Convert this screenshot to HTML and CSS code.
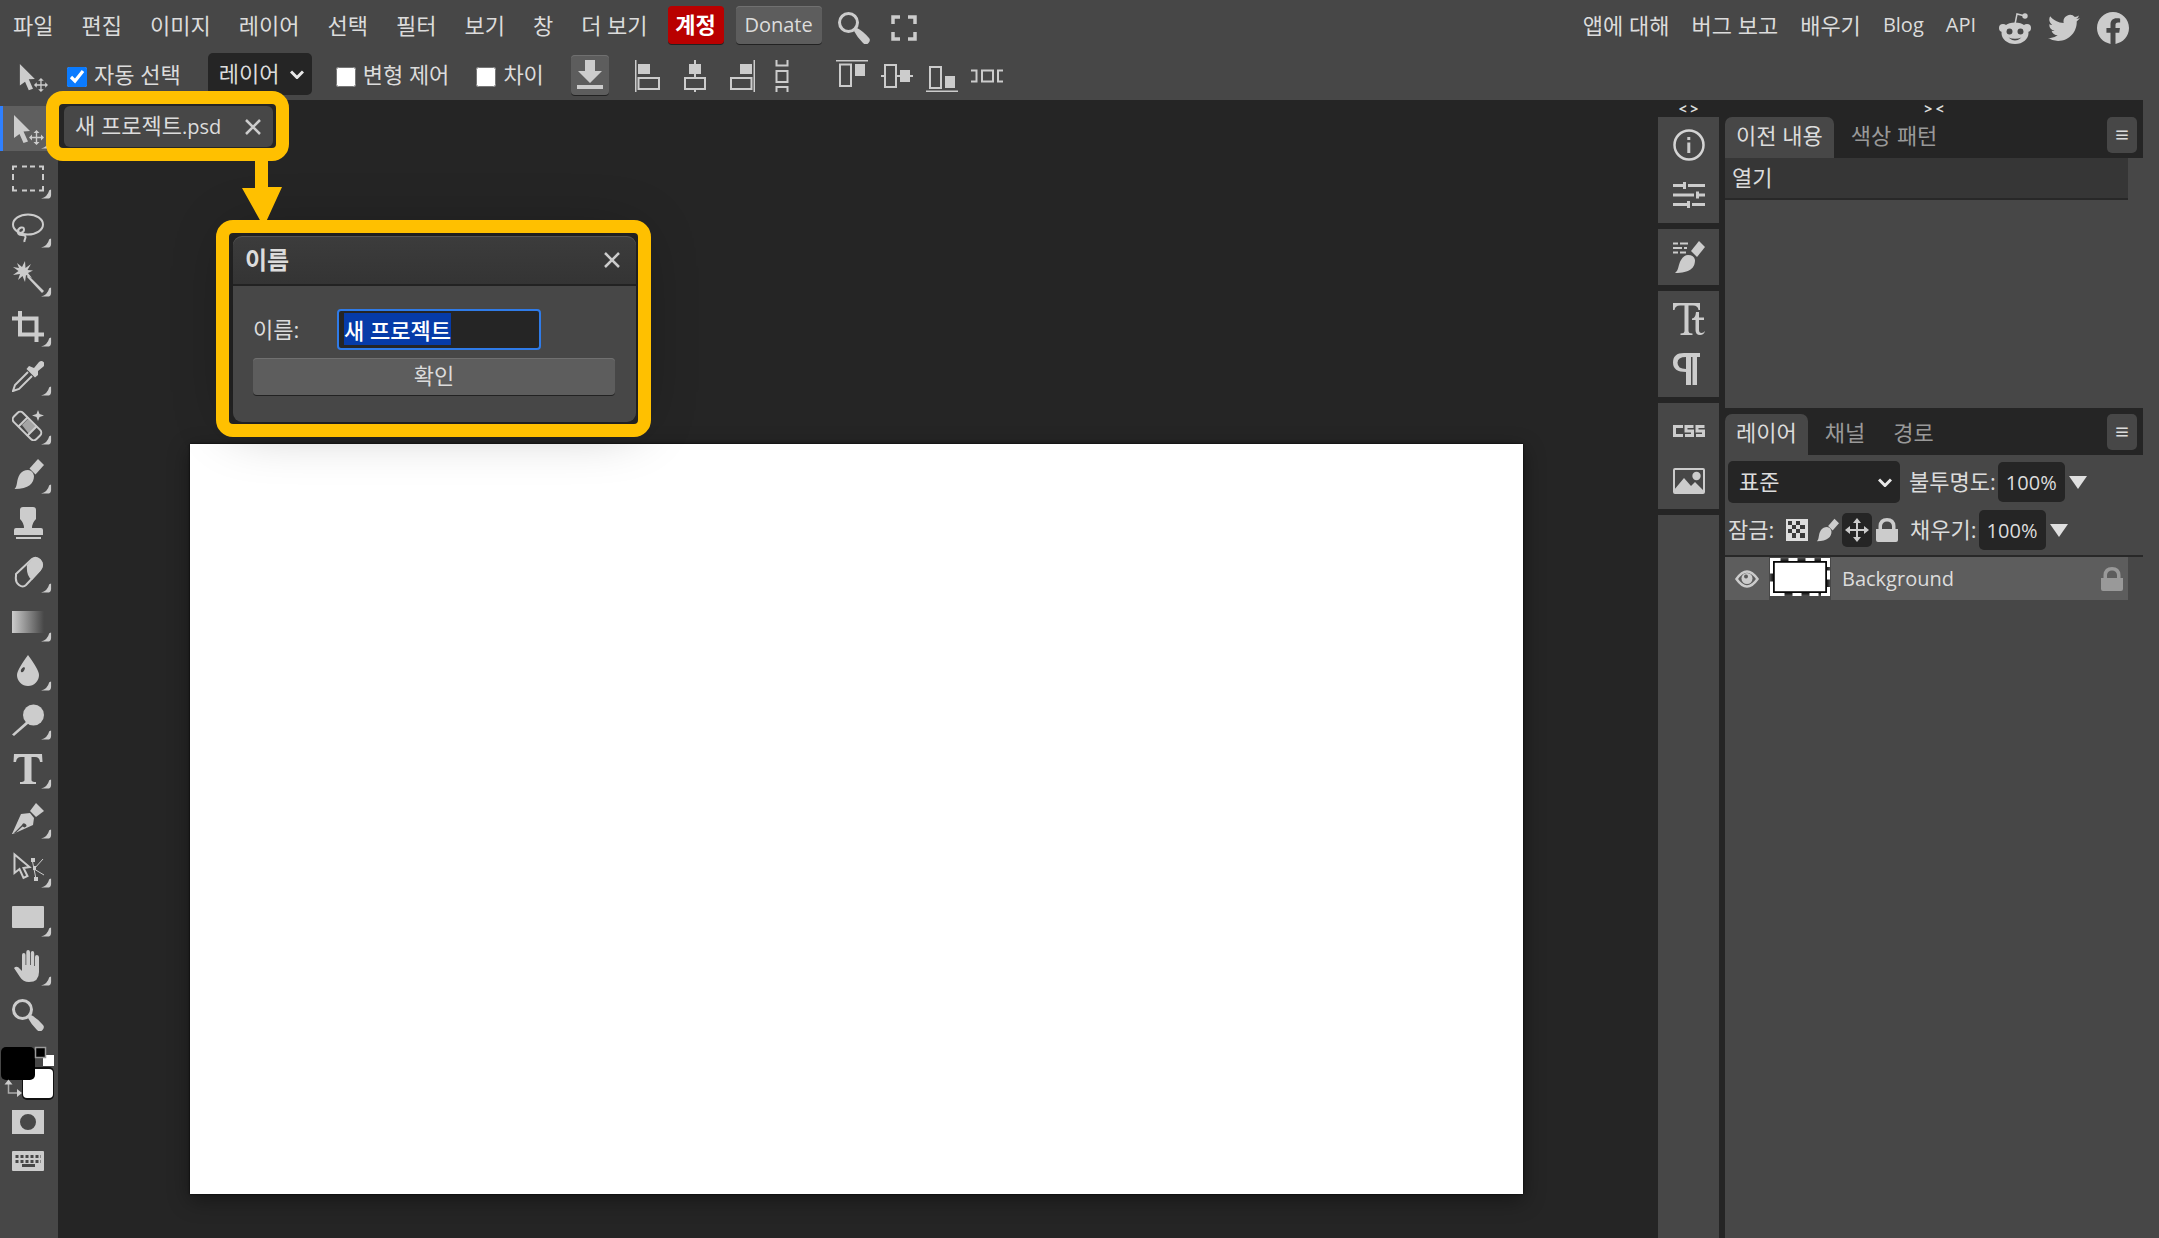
FILE: index.html
```html
<!DOCTYPE html>
<html lang="ko">
<head>
<meta charset="utf-8">
<title>새 프로젝트.psd</title>
<link rel="stylesheet" href="styles.css">
</head>
<body>
<svg class="defs" aria-hidden="true">
  <defs>
    <linearGradient id="fade"><stop offset="0" stop-color="#ccc"/><stop offset="1" stop-color="#474747"/></linearGradient>
  </defs>
  <symbol id="more" viewBox="0 0 12 10"><path d="M0 10Q7 8.500 9 1L11 0V6Q11 10 7 10Z"/></symbol>
  <symbol id="move" viewBox="0 0 32 32"><path d="M2 2L18 18L11.500 18.500L16 28.500L11.500 30L7.500 21L2 25Z"/><path d="M24.500 17l3 3h-2.300v3.800H29v-2.300l3 3-3 3v-2.300h-3.800V29h2.300l-3 3-3-3h2.300v-3.800H20v2.300l-3-3 3-3v2.300h3.800V20h-2.300z"/></symbol>
  <symbol id="marquee" viewBox="0 0 32 32"><path class="line" d="M1 8V4.500H5M10 4.500h5M18 4.500h5M27 4.500h4V8M31 12v6M31 24v4.500h-4M23 28.500h-5M15 28.500h-5M5 28.500H1V24M1 18v-6" transform="translate(0 -1)"/></symbol>
  <symbol id="lasso" viewBox="0 0 32 32"><ellipse class="line" cx="16" cy="12.500" rx="15" ry="10"/><path class="line" d="M6 20c0-5 6-6 6-2.500s-5 4.500-6 2.500c-.5 5 8 1 7.500 5.500-.2 1.500-1.500 2.500-1 4.500"/></symbol>
  <symbol id="wand" viewBox="0 0 32 32"><path d="M13 0l.5 7 5.500-4-3.500 6 5.500.5-5 2.500 4 5-6-3-1 7-2.500-6L6 19l2-6-7 1 5.500-4L1 6l6 1L5 2l5 4z"/><path d="M16 14l16 16-2 2-15-16z"/></symbol>
  <symbol id="crop" viewBox="0 0 32 32"><path class="thick" d="M0 8.500h24.500V32M8 1v23.500h24"/></symbol>
  <symbol id="dropper" viewBox="0 0 32 32"><path d="M22 8l5-6q2.500-2 4.500 0t0 4.500L26 11v4l-3 2.500-8.500-8.500L17 6z"/><path class="line" d="M16 12L3 25 1 31l6-2 13-13"/></symbol>
  <symbol id="heal" viewBox="0 0 32 32"><rect class="line" x="-1" y="10.500" width="32" height="13" rx="4" transform="rotate(45 15 17)"/><path class="line" d="M16 8L6 18M25 17L15 27"/><path d="M10 16l6-6 8 8-7 7z" opacity=".7"/><path d="M26 1l1.500 4L32 6.500 27.500 8 26 12l-1.500-4L20 6.500 24.500 5z"/></symbol>
  <symbol id="brush" viewBox="0 0 32 32"><path d="M26 1l6 6-8.500 9.500-6-6z"/><path d="M16 12q5 .5 6 6c0 7-5 13-19.500 13C6 28 4 22 8 16q3-4 8-4z"/></symbol>
  <symbol id="stamp" viewBox="0 0 32 32"><path d="M8 3q0-3 3-3h10q3 0 3 3v9q-4 4-4 9h9q2 0 2 2v5H2v-5q0-2 2-2h8q0-5-4-9zM4 30h25v2H4z"/></symbol>
  <symbol id="eraser" viewBox="0 0 32 32"><path class="line" d="M4 18L20 3q4-3 8 1 4 5 0 10L14 29q-3 3-7 0t-3-9z"/><path d="M15 9l6-7q4-2 8 2t0 10l-9 10q-6-4-5-15z"/></symbol>
  <symbol id="gradient" viewBox="0 0 32 32"><path fill="url(#fade)" d="M0 5h32v22H0z"/></symbol>
  <symbol id="drop" viewBox="0 0 32 32"><path fill-rule="evenodd" d="M16 0q11 15 11 20a11 11 0 0 1-22 0Q5 15 16 0zM12 12q-4 2-3 5 3 1 4-4z"/></symbol>
  <symbol id="dodge" viewBox="0 0 32 32"><circle cx="21.500" cy="11" r="10.500"/><path d="M15 17l2 2L2 32 0 30.500z"/></symbol>
  <symbol id="type" viewBox="0 0 32 32"><path d="M2 1h28l.5 8H28q-.5-5-5-5h-3.500v23q0 2 4.500 2v2H8v-2q4.500 0 4.500-2V4H9Q4.500 4 4 9H1.500z"/></symbol>
  <symbol id="pen" viewBox="0 0 32 32"><path d="M24 1l8 8-8 6-6-6z"/><path fill-rule="evenodd" d="M9 12l9-1 4 5-1 7L1 32l9-9q1-3 3.500-1t-1 3.500l-2-1L3 31.500 0 32z"/></symbol>
  <symbol id="path" viewBox="0 0 32 32"><path class="line" d="M2.500 2.500V21l5-4 4 9 4-2-4-8 6-1z"/><path class="line thin" d="M20 7l4 20M22 17l9-10M22 17l10 6"/><path d="M19 6h4v4h-4zM21 14h3v4h-3zM22 25h4v4h-4z"/></symbol>
  <symbol id="rect" viewBox="0 0 32 32"><rect y="5" width="32" height="22" rx="1"/></symbol>
  <symbol id="hand" viewBox="0 0 32 32"><path d="M2 18q3-3 6 1l2 2V5q0-2 1.800-2T13.500 5v10h.8V2q0-2 1.800-2T18 2v13h.8V3q0-2 1.700-2t1.700 2v13h.8V7q0-2 1.800-2T27 7v15q0 10-10 10-6 0-9-5z"/></symbol>
  <symbol id="zoom" viewBox="0 0 32 32"><circle cx="10.500" cy="10.500" r="9" fill="none" stroke="#ccc" stroke-width="3"/><path d="M16 19l3-3q6 3 12 10 2 2-.5 5t-5.500 0q-6-6-9-12z"/></symbol>
  <symbol id="mask" viewBox="0 0 32 24"><path fill-rule="evenodd" d="M0 0h32v24H0zM16 4a8 8 0 1 0 0 16 8 8 0 0 0 0-16z"/></symbol>
  <symbol id="keyboard" viewBox="0 0 32 20"><rect width="32" height="20" rx="1"/><path stroke="#474747" stroke-width="3" stroke-dasharray="3 2" d="M3.500 5.500H29M3.500 10.500H29"/><path fill="#474747" d="M10 13h13v3H10z"/></symbol>
  <symbol id="lock" viewBox="0 0 22 24"><path fill-rule="evenodd" d="M0 11h2.500V8Q3 0 11 0t8.500 8v3H22v11q0 2-2 2H2q-2 0-2-2zM6 11h10V8q-.5-4.500-5-4.500T6 8z"/></symbol>
  <symbol id="close" viewBox="0 0 16 16"><path fill="none" stroke="#ccc" stroke-width="2.500" d="M1 1l14 14M15 1L1 15"/></symbol>
  <symbol id="chevron" viewBox="0 0 14 9"><path fill="none" stroke="#e8e8e8" stroke-width="3" d="M1 1.500l6 6 6-6"/></symbol>
</svg>

<header class="top">
  <nav class="menubar">
    <div class="menus">
      <button>파일</button><button>편집</button><button>이미지</button><button>레이어</button><button>선택</button><button>필터</button><button>보기</button><button>창</button><button>더 보기</button>
    </div>
    <button class="raised account">계정</button>
    <button class="raised donate">Donate</button>
    <button class="bare search" aria-label="검색"><svg class="i32"><use href="#zoom"/></svg></button>
    <button class="bare" aria-label="전체 화면"><svg class="i26" viewBox="0 0 26 26"><path fill="none" stroke="#ccc" stroke-width="3.500" d="M2 9V2h7M17 2h7v7M24 17v7h-7M9 24H2v-7"/></svg></button>
    <div class="links">
      <a href="#about">앱에 대해</a><a href="#bug">버그 보고</a><a href="#learn">배우기</a><a class="latin" href="#blog">Blog</a><a class="latin" href="#api">API</a>
    </div>
    <div class="social">
      <a href="#reddit" aria-label="Reddit"><svg class="i32" viewBox="0 0 32 32"><path fill="none" stroke="#ccc" stroke-width="1.500" d="M16 12l2-10 8 2"/><circle cx="26" cy="4" r="2.700"/><circle cx="4" cy="16" r="4"/><circle cx="28" cy="16" r="4"/><path fill-rule="evenodd" d="M16 10.500c8 0 13.500 4.500 13.500 10.500S24 32 16 32 2.500 27 2.500 21 8 10.500 16 10.500zM10.500 16.500a3 3 0 1 0 0 6 3 3 0 0 0 0-6zm11 0a3 3 0 1 0 0 6 3 3 0 0 0 0-6zM9.500 25.500q6.500 6 13 0-6.500 2.500-13 0z"/></svg></a>
      <a href="#twitter" aria-label="Twitter"><svg class="i32" viewBox="0 0 24 24"><path d="M23.950 4.570a10 10 0 0 1-2.820.77 4.960 4.960 0 0 0 2.160-2.720c-.95.55-2 .95-3.130 1.180a4.920 4.920 0 0 0-8.380 4.480C7.690 8.090 4.070 6.130 1.640 3.160a4.920 4.920 0 0 0 1.520 6.570 4.900 4.900 0 0 1-2.230-.61v.06a4.920 4.920 0 0 0 3.950 4.830 5 5 0 0 1-2.210.08 4.940 4.940 0 0 0 4.600 3.420A9.870 9.870 0 0 1 0 19.540a14 14 0 0 0 7.550 2.210c9.050 0 14-7.500 14-13.980 0-.21 0-.42-.02-.63a9.900 9.900 0 0 0 2.420-2.570z"/></svg></a>
      <a href="#facebook" aria-label="Facebook"><svg class="i32" viewBox="0 0 24 24"><path d="M24 12.070C24 5.450 18.630.07 12 .07S0 5.450 0 12.070c0 5.990 4.390 10.950 10.130 11.860v-8.390H7.080v-3.470h3.050V9.430c0-3.010 1.790-4.670 4.530-4.670 1.310 0 2.690.23 2.690.23v2.960h-1.520c-1.490 0-1.950.92-1.950 1.870v2.250h3.320l-.53 3.470h-2.790v8.390C19.610 23.020 24 18.060 24 12.070z"/></svg></a>
    </div>
  </nav>
  <div class="options">
    <svg class="i30 current"><use href="#move"/></svg>
    <label class="check"><input type="checkbox" checked>자동 선택</label>
    <div class="pick target"><select aria-label="대상"><option>레이어</option></select><svg><use href="#chevron"/></svg></div>
    <label class="check"><input type="checkbox">변형 제어</label>
    <label class="check"><input type="checkbox">차이</label>
    <button class="raised download" aria-label="내려받기"><svg viewBox="0 0 26 30" width="26" height="30"><path d="M8 0h10v11h7L13 23 1 11h7zM0 25h26v4H0z"/></svg></button>
    <div class="aligns">
      <button class="bare" aria-label="왼쪽 정렬"><svg class="i32" viewBox="0 0 32 32"><path d="M7 4h12v10H7zM4 0h1.500v32H4z"/><path class="line" d="M7.500 18H28v11H7.500z"/></svg></button>
      <button class="bare" aria-label="가로 가운데 정렬"><svg class="i32" viewBox="0 0 32 32"><path d="M10 4h12v10H10zM15 0h2v17h-2zM15 29h2v3h-2z"/><path class="line" d="M6 18h20v11H6z"/></svg></button>
      <button class="bare" aria-label="오른쪽 정렬"><svg class="i32" viewBox="0 0 32 32"><path d="M13 4h12v10H13zM26.500 0H28v32h-1.500z"/><path class="line" d="M4 18h20.500v11H4z"/></svg></button>
      <button class="bare" aria-label="세로 분배"><svg viewBox="0 0 14 32" width="14" height="32"><path class="line" d="M1.500 0v5.500h11V0M1.500 11h11v11h-11zM1.500 32v-5h11v5"/></svg></button>
    </div>
    <div class="aligns rows">
      <button class="bare" aria-label="위쪽 정렬"><svg class="i32" viewBox="0 0 32 32"><path d="M0 0h32v1.500H0zM19 4h10v12H19z"/><path class="line" d="M4 4.500h11V26H4z"/></svg></button>
      <button class="bare" aria-label="세로 가운데 정렬"><svg class="i32" viewBox="0 0 32 32"><path d="M0 15h4v2H0zM15 15h17v2H15zM19 10h10v12H19z"/><path class="line" d="M4 5h11v22H4z"/></svg></button>
      <button class="bare" aria-label="아래쪽 정렬"><svg class="i32" viewBox="0 0 32 32"><path d="M0 30.500h32V32H0zM19 16h10v12H19z"/><path class="line" d="M4 7h11v21H4z"/></svg></button>
      <button class="bare" aria-label="가로 분배"><svg class="i32" viewBox="0 0 32 32"><path class="line" d="M0 10.500h5.500v11H0M11 10.500h11v11H11zM32 10.500h-5v11h5"/></svg></button>
    </div>
  </div>
</header>

<main class="work">
  <aside class="tools">
    <button class="tool active" aria-label="이동"><svg class="i32"><use href="#move"/></svg><svg class="more"><use href="#more"/></svg></button>
    <button class="tool" aria-label="사각 선택"><svg class="i32"><use href="#marquee"/></svg><svg class="more"><use href="#more"/></svg></button>
    <button class="tool" aria-label="올가미"><svg class="i32"><use href="#lasso"/></svg><svg class="more"><use href="#more"/></svg></button>
    <button class="tool" aria-label="마술봉"><svg class="i32"><use href="#wand"/></svg><svg class="more"><use href="#more"/></svg></button>
    <button class="tool" aria-label="자르기"><svg class="i32"><use href="#crop"/></svg><svg class="more"><use href="#more"/></svg></button>
    <button class="tool" aria-label="스포이드"><svg class="i32"><use href="#dropper"/></svg><svg class="more"><use href="#more"/></svg></button>
    <button class="tool" aria-label="복구"><svg class="i32"><use href="#heal"/></svg><svg class="more"><use href="#more"/></svg></button>
    <button class="tool" aria-label="브러시"><svg class="i32"><use href="#brush"/></svg><svg class="more"><use href="#more"/></svg></button>
    <button class="tool" aria-label="도장"><svg class="i32"><use href="#stamp"/></svg></button>
    <button class="tool" aria-label="지우개"><svg class="i32"><use href="#eraser"/></svg><svg class="more"><use href="#more"/></svg></button>
    <button class="tool" aria-label="그레이디언트"><svg class="i32"><use href="#gradient"/></svg><svg class="more"><use href="#more"/></svg></button>
    <button class="tool" aria-label="흐림"><svg class="i32"><use href="#drop"/></svg><svg class="more"><use href="#more"/></svg></button>
    <button class="tool" aria-label="닷지"><svg class="i32"><use href="#dodge"/></svg><svg class="more"><use href="#more"/></svg></button>
    <button class="tool" aria-label="문자"><svg class="i32"><use href="#type"/></svg><svg class="more"><use href="#more"/></svg></button>
    <button class="tool" aria-label="펜"><svg class="i32"><use href="#pen"/></svg><svg class="more"><use href="#more"/></svg></button>
    <button class="tool" aria-label="패스 선택"><svg class="i32"><use href="#path"/></svg><svg class="more"><use href="#more"/></svg></button>
    <button class="tool" aria-label="사각형"><svg class="i32"><use href="#rect"/></svg><svg class="more"><use href="#more"/></svg></button>
    <button class="tool" aria-label="손"><svg class="i32"><use href="#hand"/></svg><svg class="more"><use href="#more"/></svg></button>
    <button class="tool" aria-label="돋보기"><svg class="i32"><use href="#zoom"/></svg></button>
    <svg class="swatches" viewBox="0 0 58 56"><rect x="22" y="21" width="32" height="33" rx="5" fill="#111"/><rect x="23" y="23" width="30" height="29" rx="4" fill="#fff"/><rect x="1" y="1" width="34" height="33" rx="5" fill="#000"/><path fill="#fff" d="M43 9h11v11H43z"/><path fill="#000" stroke="#999" stroke-width="1.500" d="M35.500 1.500h10v10h-10z"/><path fill="none" stroke="#aaa" stroke-width="1.500" d="M8.500 37v10H20"/><path d="M8.500 33.500l-4 5h8zM22 47l-5-4v8z"/></svg>
    <button class="tool quick" aria-label="빠른 마스크"><svg width="32" height="24"><use href="#mask"/></svg></button>
    <button class="tool quick" aria-label="키보드"><svg width="32" height="20"><use href="#keyboard"/></svg></button>
  </aside>

  <section class="stage">
    <div class="tabs">
      <div class="doc"><span>새 프로젝트<span class="latin">.psd</span></span><button class="bare" aria-label="닫기"><svg class="i16"><use href="#close"/></svg></button></div>
    </div>
    <div class="canvas"></div>

    <form class="dialog">
      <div class="title"><h2>이름</h2><button type="button" class="bare" aria-label="닫기"><svg class="i16"><use href="#close"/></svg></button></div>
      <div class="body">
        <div class="field"><label for="name">이름:</label><input id="name" type="text" value="새 프로젝트" autofocus></div>
        <button type="button" class="raised ok">확인</button>
      </div>
    </form>
    <svg class="arrow" viewBox="0 0 40 64"><path d="M13 0h13v27h14L24 62h-5L0 28h13z"/></svg>
    <div class="frame frame-tab"></div>
    <div class="frame frame-dialog"></div>
  </section>

  <aside class="strip">
    <button class="fold">&lt; &gt;</button>
    <div class="group">
      <button class="bare" aria-label="정보"><svg class="i32" viewBox="0 0 32 32"><circle cx="16" cy="16" r="14.500" fill="none" stroke="#d4d4d4" stroke-width="2.500"/><path d="M14.300 8h3v3h-3zM14.300 13.500h3V24h-3z"/></svg></button>
      <button class="bare" aria-label="조정"><svg class="i32" viewBox="0 0 32 32"><path d="M0 5h10V3h3v7h-3V8H0zM15 5h17v3H15zM0 14.500h21v3H0zM23 12.500h3v2h6v3h-6v2h-3zM0 24h14v-2h3v7h-3v-2H0zM19 24h13v3H19z"/></svg></button>
    </div>
    <div class="group">
      <button class="bare" aria-label="브러시"><svg class="i32" viewBox="0 0 32 32"><path d="M26 0l6 6-8 10-6-6z"/><path d="M15 14q6 0 7 5c0 8-5 13-20 13 4-3 3-8 6-13q3-5 7-5z"/><path fill="none" stroke="#ccc" stroke-width="2" d="M0 2.500h5M7 2.500h8M0 7h9M11 7h3M0 11.500h5M7 11.500h6"/></svg></button>
    </div>
    <div class="group">
      <button class="bare" aria-label="문자"><svg class="i32" viewBox="0 0 32 32"><path d="M0 0h27v7h-1.500Q25 2.500 20 2.500h-4.500V28q0 2.500 4 2.500V32H7.500v-1.500q4 0 4-2.500V2.500H7Q2 2.500 1.500 7H0z"/><path d="M23 9h3v5.500h5V17h-5v10q0 3 2.500 3 2 0 3.500-2-1 4-5 4-4.500 0-4.500-5V17H19v-1.500q3.500-.5 4-6.500z"/></svg></button>
      <button class="bare" aria-label="단락"><svg class="i32" viewBox="0 0 32 32"><path d="M27 0v4h-3v28h-4.500V4H18v28h-5V19Q0 19 0 9.500T11 0z"/><path fill="#474747" d="M13 4v12Q4.500 16 4.500 9.800 4.500 4 13 4z"/></svg></button>
    </div>
    <div class="group">
      <button class="bare" aria-label="CSS"><svg class="i32" viewBox="0 0 32 32"><path fill="none" stroke="#ccc" stroke-width="3" d="M10 11.500H1.500v9H10M20.500 11.500h-7.500V16h6.500v4.500H12M31.500 11.500H24V16h6.500v4.500H23"/></svg></button>
      <button class="bare" aria-label="이미지"><svg class="i32" viewBox="0 0 32 32"><rect class="line" x="1" y="4" width="30" height="24" rx="1"/><path d="M1 25l10-12 7 8 4-4 9 9v2H1z"/><circle cx="23.500" cy="11" r="4.200"/></svg></button>
    </div>
    <div class="group rest"></div>
  </aside>

  <aside class="side">
    <button class="fold">&gt; &lt;</button>
    <div class="panel history">
      <div class="heads"><button class="on">이전 내용</button><button>색상 패턴</button><button class="menu">≡</button></div>
      <div class="entry">열기</div>
    </div>
    <div class="panel layers">
      <div class="heads"><button class="on">레이어</button><button>채널</button><button>경로</button><button class="menu">≡</button></div>
      <div class="props">
        <div class="row">
          <div class="pick blend"><select aria-label="혼합 모드"><option>표준</option></select><svg><use href="#chevron"/></svg></div>
          <label for="opacity">불투명도:</label><input id="opacity" class="num" value="100%"><svg class="tri" viewBox="0 0 18 13"><path d="M0 0h18L9 13z"/></svg>
        </div>
        <div class="row">
          <span class="lockname">잠금:</span>
          <button class="bare lk" aria-label="투명 픽셀"><svg class="i22" viewBox="0 0 22 22"><path fill="#ddd" d="M0 0h22v22H0z"/><path fill="#3a3a3a" d="M2 2h4v4H2zM10 2h4v4h-4zM6 6h4v4H6zM14 6h5v4h-5zM2 10h4v4H2zM10 10h4v4h-4zM6 14h4v5H6zM14 14h5v5h-5z"/></svg></button>
          <button class="bare lk" aria-label="픽셀"><svg class="i24"><use href="#brush"/></svg></button>
          <button class="bare lk pressed" aria-label="위치"><svg class="i24" viewBox="0 0 24 24"><path d="M12 0l4 5h-3v6h6V8l5 4-5 4v-3h-6v6h3l-4 5-4-5h3v-6H5v3l-5-4 5-4v3h6V5H8z"/></svg></button>
          <button class="bare lk" aria-label="모두"><svg width="22" height="24"><use href="#lock"/></svg></button>
          <label class="filllabel" for="fill">채우기:</label><input id="fill" class="num" value="100%"><svg class="tri" viewBox="0 0 18 13"><path d="M0 0h18L9 13z"/></svg>
        </div>
      </div>
      <div class="layer">
        <button class="bare eye" aria-label="보기"><svg width="24" height="18" viewBox="0 0 24 18"><path fill="none" stroke="#ccc" stroke-width="2.500" d="M1.500 9q10.500-15 21 0-10.500 15-21 0z"/><circle cx="12" cy="8.500" r="5.500"/><circle cx="11" cy="6.500" r="2" fill="#5b5b5b"/></svg></button>
        <div class="thumb"><svg width="60" height="38" viewBox="0 0 60 38"><rect x="1.500" y="1.500" width="57" height="35" fill="#222" stroke="#fff" stroke-width="3" stroke-dasharray="9 8"/><path fill="none" stroke="#fff" stroke-width="3" d="M1.500 9V1.500H9M51 1.500h7.500V9M58.500 29v7.500H51M9 36.500H1.500V29"/><path fill="#fff" stroke="#000" stroke-width="1.500" d="M4 4h52v30H4z"/></svg></div>
        <div class="name latin">Background</div>
        <svg class="locked" width="22" height="24"><use href="#lock"/></svg>
      </div>
    </div>
  </aside>
</main>
<script src="main.js"></script>
</body>
</html>
```
FILE: main.js
```js
// The name is ready to be typed over as soon as the dialog opens.
const nameField = document.getElementById('name');
nameField.focus();
nameField.select();
```
FILE: styles.css
```css
:root {
  --base: #474747;
  --dark: #252525;
  --raised: #5d5d5d;
  --text: #dcdcdc;
  --amber: #ffc000;
}
* { box-sizing: border-box; }
body {
  margin: 0;
  min-height: 100vh;
  display: flex;
  flex-direction: column;
  background: var(--base);
  color: var(--text);
  font: 22px/30px "Open Sans", "Noto Sans CJK KR", sans-serif;
  overflow: hidden;
}
button, input, select { font: inherit; color: inherit; border: 0; margin: 0; padding: 0; background: none; }
a { color: inherit; text-decoration: none; }
svg { display: block; fill: #ccc; flex: none; }
.defs { position: absolute; width: 0; height: 0; }
.line { fill: none; stroke: #ccc; stroke-width: 2; }
.thick { fill: none; stroke: #ccc; stroke-width: 4; }
.thin { stroke-width: 1; }
.latin { font-size: 20px; }
.bare { display: flex; align-items: center; justify-content: center; }
.i16 { width: 16px; height: 16px; }
.i22 { width: 22px; height: 22px; }
.i24 { width: 24px; height: 24px; }
.i26 { width: 26px; height: 26px; }
.i30 { width: 30px; height: 30px; }
.i32 { width: 32px; height: 32px; }
.raised {
  background: var(--raised);
  border-radius: 4px;
  box-shadow: inset 0 1px #707070, 0 1px #222;
}

/* Menu bar and tool options */
.menubar { display: flex; align-items: center; height: 50px; }
.menus { display: flex; padding-left: 1px; }
.menus button { padding: 0 16px 1px 12px; white-space: nowrap; }
.account { width: 56px; height: 38px; margin-left: 4px; padding-bottom: 2px; background: #b90000; color: #fff; font-weight: bold; box-shadow: 0 1px #222; }
.donate { width: 86px; height: 38px; margin-left: 12px; font-size: 20px; }
.search { margin: 6px 21px 0 16px; }
.search + .bare { margin-top: 6px; }
.links { display: flex; gap: 22px; margin-left: auto; white-space: nowrap; }
.social { display: flex; gap: 17px; margin: 6px 30px 0 23px; }

.options { display: flex; align-items: center; height: 50px; padding-bottom: 2px; padding-left: 18px; }
.current { margin: 6px 19px 0 0; }
.check { display: flex; align-items: center; gap: 7px; white-space: nowrap; margin-right: 27px; }
.check input { width: 20px; height: 20px; margin-top: 6px; accent-color: #0a7bff; }
.pick { position: relative; display: flex; align-items: center; height: 42px; background: var(--dark); border-radius: 5px; }
.pick select { appearance: none; width: 100%; height: 100%; padding: 0 11px 2px; }
.pick svg { position: absolute; right: 8px; width: 14px; height: 9px; pointer-events: none; }
.target { width: 104px; margin-right: 24px; }
.download { display: flex; align-items: center; justify-content: center; width: 38px; height: 40px; margin-top: 2px; }
.aligns { display: flex; gap: 16px; margin-left: 22px; padding-top: 4px; }
.aligns.rows { gap: 13px; margin-left: 47px; }

/* Work area */
.work { flex: 1; display: flex; min-height: 0; }
.tools { width: 58px; flex: none; display: flex; flex-direction: column; padding-top: 6px; }
.tool { display: flex; position: relative; align-items: center; width: 58px; height: 49px; padding-left: 12px; flex: none; }
.tool:nth-child(5n) { height: 50px; }
.tool .more { position: absolute; left: 41px; bottom: 4px; width: 11px; height: 10px; }
.tool.active { background: #5f5f5f; height: 45px; margin-bottom: 3px; border-left: 3px solid #2f80ff; padding-left: 9px; }
.tool.active .more { left: 38px; bottom: 2px; }
.swatches { width: 58px; height: 56px; margin-top: 7px; }
.tool.quick { height: 39px; }

.stage { position: relative; flex: 1; display: flex; flex-direction: column; justify-content: space-between; background: var(--dark); padding: 6px 135px 44px 132px; }
.tabs { display: flex; margin-left: -126px; }
.doc { display: flex; align-items: center; height: 41px; padding: 0 12px 0 11px; border-radius: 6px; background: var(--base); white-space: nowrap; }
.doc > span { padding-bottom: 2px; }
.doc .bare { margin-left: 24px; }
.canvas { aspect-ratio: 16 / 9; background: #fff; box-shadow: 0 0 2px #000, 0 6px 20px #0006; }

.dialog { position: absolute; left: 175px; top: 136px; width: 403px; border-radius: 9px; background: var(--base); box-shadow: 0 0 60px #0005; overflow: hidden; }
.dialog::before { content: ""; position: absolute; inset: 0; border-radius: 9px; box-shadow: inset 0 1px #555; pointer-events: none; }
.title { display: flex; align-items: center; justify-content: space-between; height: 50px; padding: 0 16px 0 12px; background: linear-gradient(#3c3c3c, #343434); border-bottom: 2px solid #222; }
.title h2 { margin: 0; font-size: 24px; line-height: 30px; }
.body { display: flex; flex-direction: column; gap: 8px; padding: 23px 21px 27px 20px; }
.field { display: flex; align-items: center; height: 41px; }
.field label { width: 84px; padding-bottom: 2px; }
.field input { width: 204px; height: 41px; padding: 0 5px 2px; border: 2px solid #2f7be8; border-radius: 4px; background: var(--dark); font-weight: 500; outline: 0; }
.field input::selection { background: #063ba8; color: #fff; }
.ok { height: 37px; padding-bottom: 3px; }
.frame { position: absolute; border: 13px solid var(--amber); border-radius: 17px; pointer-events: none; }
.frame-tab { left: -12px; top: -9px; width: 243px; height: 70px; }
.frame-dialog { left: 158px; top: 120px; width: 435px; height: 217px; }
.arrow { position: absolute; left: 184px; top: 60px; width: 40px; height: 64px; fill: var(--amber); }

/* Collapsed panel strip */
.strip { display: flex; flex-direction: column; gap: 6px; width: 67px; flex: none; padding-right: 6px; background: var(--dark); }
.fold { height: 17px; width: 100%; font-size: 14px; line-height: 17px; font-weight: bold; flex: none; }
.strip .fold { margin-bottom: -6px; }
.group { background: var(--base); padding: 3px 0; }
.group .bare { width: 61px; height: 50px; }
.rest { flex: 1; }

/* Right side panels */
.side { width: 418px; margin-right: 16px; flex: none; display: flex; flex-direction: column; background: var(--dark); }
.side .fold { display: block; }
.panel { background: var(--base); }
.heads { display: flex; height: 41px; background: var(--dark); padding-right: 6px; }
.heads button { padding: 0 11px 5px; color: #999; white-space: nowrap; margin-right: 6px; }
.heads .on { background: var(--base); color: var(--text); border-radius: 7px 7px 0 0; }
.heads .menu { width: 30px; height: 36px; margin: 0 0 0 auto; padding: 0; border-radius: 5px; background: var(--base); color: var(--text); font-size: 16px; font-weight: bold; }
.history { height: 291px; margin-bottom: 6px; }
.entry { height: 42px; margin-right: 15px; padding: 4px 7px; background: #363636; border-bottom: 2px solid #282828; }
.layers { flex: 1; }
.props { display: flex; flex-direction: column; gap: 6px; height: 102px; padding: 6px 0 0 3px; border-bottom: 2px solid #282828; }
.row { display: flex; align-items: center; height: 42px; white-space: nowrap; }
.row label, .lockname { padding-bottom: 2px; }
.blend { width: 172px; margin-right: 9px; }
.num { width: 67px; height: 40px; margin-left: 2px; text-align: center; background: var(--dark); border-radius: 5px; font-size: 20px; }
.tri { width: 18px; height: 13px; margin-left: 4px; fill: #e0e0e0; }
.lockname { width: 54px; }
.lk { width: 30px; height: 34px; }
.lk.pressed { background: var(--dark); border-radius: 5px; }
.filllabel { margin-left: 8px; }
.layer { display: flex; align-items: stretch; height: 43px; margin-right: 15px; background: var(--raised); }
.eye { width: 44px; }
.thumb { width: 62px; background: var(--base); padding: 1px; }
.name { flex: 1; padding: 7px 11px; }
.locked { align-self: center; margin-right: 5px; fill: #999; }
```
